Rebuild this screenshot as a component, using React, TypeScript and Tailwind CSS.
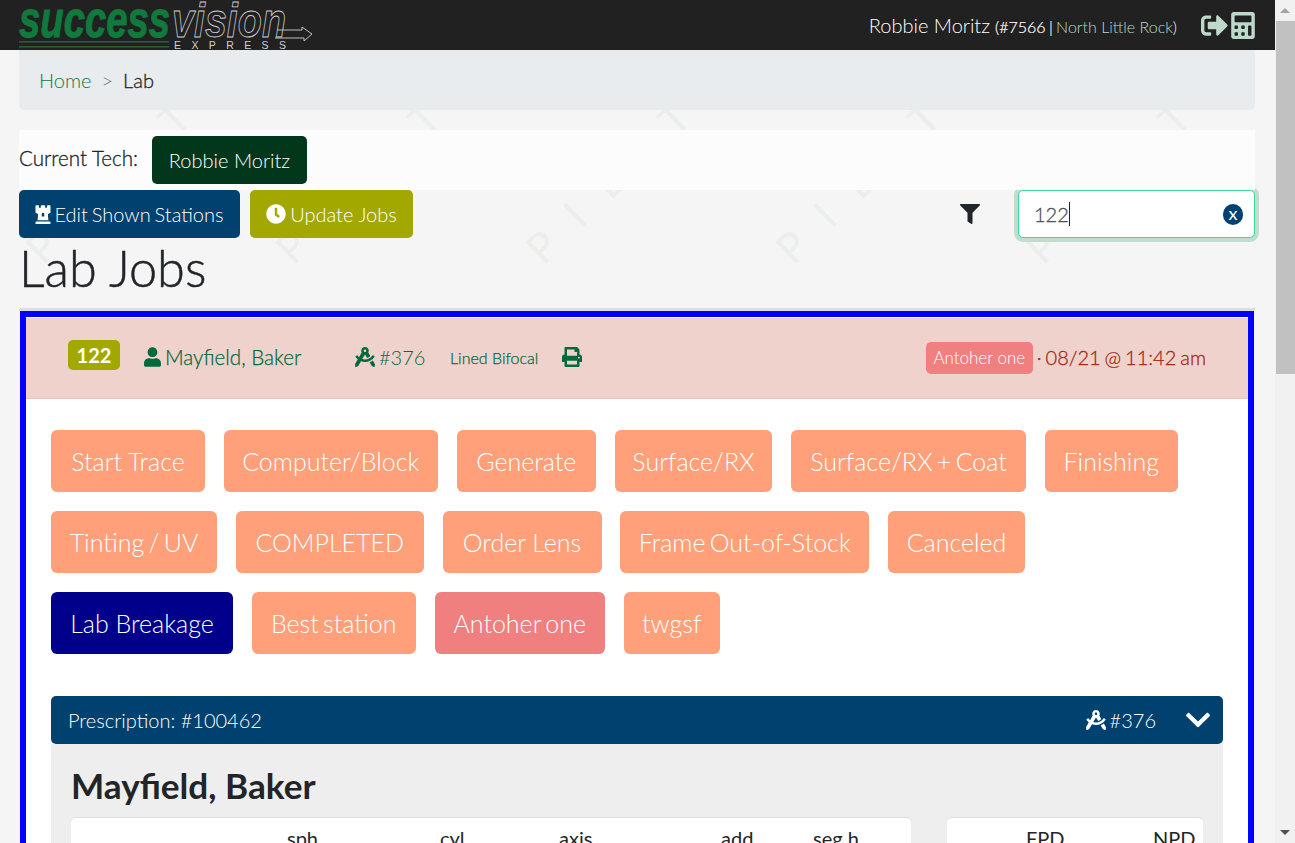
import { FaCalculator, FaChessRook, FaChevronDown, FaClock, FaDraftingCompass, FaFilter, FaPrint, FaSignOutAlt, FaUser } from 'react-icons/fa'

const stationRows = [
  [
    { name: 'Start Trace', width: 'w-[154px]' },
    { name: 'Computer/Block', width: 'w-[214px]' },
    { name: 'Generate', width: 'w-[139.5px]' },
    { name: 'Surface/RX', width: 'w-[157.5px]' },
    { name: 'Surface/RX + Coat', width: 'w-[235px]', tight: true },
    { name: 'Finishing', width: 'w-[133px]' },
  ],
  [
    { name: 'Tinting / UV', width: 'w-[166px]', tight: true },
    { name: 'COMPLETED', width: 'w-[188px]' },
    { name: 'Order Lens', width: 'w-[159px]' },
    { name: 'Frame Out-of-Stock', width: 'w-[249px]', tight: true },
    { name: 'Canceled', width: 'w-[137px]' },
  ],
  [
    { name: 'Lab Breakage', width: 'w-[182px]' },
    { name: 'Best station', width: 'w-[164px]', tight: true },
    { name: 'Antoher one', width: 'w-[170.5px]', tight: true },
    { name: 'twgsf', width: 'w-[96px]' },
  ],
]

const marks = [40, 290, 540, 790, 1040]

function Logo() {
  return (
    <svg width="300" height="50" viewBox="0 0 300 50" className="ml-[19px] shrink-0">
      <text x="0" y="37" textLength="151" lengthAdjust="spacingAndGlyphs" fontFamily="'Liberation Sans', sans-serif" fontWeight="700" fontStyle="italic" fontSize="52" fill="#0f7a3c" stroke="#0f7a3c" strokeWidth="1">success</text>
      <rect x="0" y="41" width="150" height="1.6" fill="#2c5a30" />
      <rect x="0" y="46" width="150" height="1.6" fill="#2c5a30" />
      <text x="153" y="37" textLength="114" lengthAdjust="spacingAndGlyphs" fontFamily="'Liberation Sans', sans-serif" fontWeight="700" fontStyle="italic" fontSize="49" fill="none" stroke="#d0d0d0" strokeWidth="0.9">vision</text>
      <path d="M258 30 H283 V27 L293 34 L285 41 V38 H256" fill="none" stroke="#d0d0d0" strokeWidth="0.9" />
      <text x="155" y="48.5" fontFamily="'Liberation Sans', sans-serif" fontSize="10.5" letterSpacing="10.4" fill="#d0d0d0">EXPRESS</text>
    </svg>
  )
}

function Watermark() {
  return (
    <div className="absolute inset-0 overflow-hidden pointer-events-none">
      {marks.map(x => (
        <div
          key={x}
          className="absolute flex w-[230px] origin-bottom-left -rotate-[44deg] font-['Lato'] text-[41px] leading-none text-[#ebeeeb]"
          style={{ left: x - 1, top: 236 }}
        >
          {'PILOT'.split('').map((c, i) => (
            <span key={i} className="w-[46px] text-center">{c}</span>
          ))}
        </div>
      ))}
    </div>
  )
}

export default function App() {
  return (
    <div className="flex h-[843px] overflow-hidden font-['Lato',sans-serif] text-[#212529]">
      <div className="relative flex-1 min-w-0 bg-[#f5f5f5]">
        <Watermark />
        <div className="relative">
          {/* Top bar */}
          <header className="h-[50px] bg-[#212121] flex items-center justify-between pr-5">
            <Logo />
            <div className="flex items-center">
              <div className="flex items-baseline">
                <span className="text-[20px] font-light text-white">Robbie Moritz</span>
                <span className="ml-[5px] text-[16px] font-light text-white whitespace-pre">
                  <span className="[-webkit-text-stroke:0.2px] [word-spacing:-1px]">(#7566 | </span>
                  <span className="text-[#bcd9ca]">North Little Rock</span>)
                </span>
              </div>
              <FaSignOutAlt className="ml-6 w-[27px] h-[27px] text-[#bcd9ca]" />
              <FaCalculator className="ml-[3px] w-[24px] h-[27px] text-[#bcd9ca]" />
            </div>
          </header>

          <main className="pl-[19px] pr-5">
            {/* Breadcrumb */}
            <nav className="h-[60px] mb-5 bg-[#e9ecef] rounded-b-[5px] flex items-center px-5 text-[20px]">
              <span className="font-light text-[#0f7a3c]">Home</span>
              <span className="mx-[10px] font-light text-[#6c757d]">&gt;</span>
              <span className="font-light [-webkit-text-stroke:0.3px]">Lab</span>
            </nav>

            {/* Current tech */}
            <div className="relative z-10 h-[60px] bg-[#fcfcfc] flex items-center text-[20px]">
              <span className="w-[133px] mb-1 text-[20.6px] font-light [-webkit-text-stroke:0.3px]">Current Tech:</span>
              <button className="w-[155px] h-12 bg-[#03371c] text-white font-light rounded-[5px]">Robbie Moritz</button>
            </div>

            {/* Actions */}
            <div className="h-12 flex items-center text-[20px]">
              <button className="h-12 w-[221px] bg-[#00416f] text-white font-light rounded-[5px] flex items-center justify-center gap-[3px] [word-spacing:-1.5px]">
                <FaChessRook className="w-[16px] h-[20px]" />
                Edit Shown Stations
              </button>
              <button className="ml-[10px] h-12 w-[163px] bg-[#a3a800] text-white font-light rounded-[5px] flex items-center justify-center gap-[4px]">
                <FaClock className="w-5 h-5" />
                Update Jobs
              </button>
              <FaFilter className="ml-auto mr-[38px] w-5 h-5 mb-[1px]" />
              <div className="relative w-[237px] h-12 bg-white border border-[#35e08e] rounded-[5px] shadow-[0_0_0_4px_#c3dccf] flex items-center pl-[15px]">
                <span className="text-[#495057] font-light [-webkit-text-stroke:0.3px]">122</span>
                <span className="w-px h-6 bg-[#212529]" />
                <span className="absolute right-[11px] top-[13px] w-5 h-[21px] rounded-full bg-[#00416f] text-white text-[18px] leading-[19px] text-center">x</span>
              </div>
            </div>

            <h1 className="h-[70px] text-[50.5px] leading-[60px] font-light [-webkit-text-stroke:0.5px]">Lab Jobs</h1>

            {/* Job card */}
            <section className="border-t-[3px] border-[#dedede]">
              <div className="ml-[0.5px] mr-px border-[6px] border-[#0000ff] border-b-0 bg-white h-[600px]">
                <div className="mt-px h-[81px] bg-[#f0d2cd] border-b border-[#e8c4b8] flex items-center pl-[42.5px] pr-[42px] pb-[2px] text-[20px] text-[#006a3c]">
                  <span className="mb-1 w-[52px] h-[30px] bg-[#a3a800] text-white font-bold rounded-[5px] text-center leading-[30px]">122</span>
                  <FaUser className="ml-6 w-[17px] h-5" />
                  <span className="ml-1 w-[190px] text-[20.6px] font-light [-webkit-text-stroke:0.25px]">Mayfield, Baker</span>
                  <FaDraftingCompass className="w-5 h-5" />
                  <span className="ml-1 font-light w-[71px]">#376</span>
                  <span className="text-[16px] mt-[2px] font-light [-webkit-text-stroke:0.25px]">Lined Bifocal</span>
                  <FaPrint className="ml-6 w-5 h-5" />
                  <span className="ml-auto mt-[2px] h-8 w-[107px] text-center bg-[#f08080] text-white text-[17px] font-light rounded-[5px] leading-8">Antoher one</span>
                  <span className="ml-[4px] text-[#a32a12] font-light [-webkit-text-stroke:0.3px] [word-spacing:-1.5px]">· 08/21 @ 11:42 am</span>
                </div>

                <div className="pl-[25.5px] pr-[25px]">
                  <div className="pt-[31px] flex flex-col gap-[19px]">
                    {stationRows.map((row, i) => (
                      <div key={i} className="flex gap-[18.75px]">
                        {row.map(s => (
                          <button
                            key={s.name}
                            className={`h-[62px] pt-[2px] rounded-[6px] text-white text-[25px] font-light ${s.width} ${s.tight ? '[word-spacing:-2.5px]' : ''} ${
                              s.name === 'Lab Breakage' ? 'bg-[#00008b]' : s.name === 'Antoher one' ? 'bg-[#f08080]' : 'bg-[#ffa07a]'
                            }`}
                          >
                            {s.name}
                          </button>
                        ))}
                      </div>
                    ))}
                  </div>

                  {/* Prescription */}
                  <div className="mt-[42px] h-12 bg-[#00416f] rounded-[5px] flex items-center pl-[17px] pr-[11px] text-white text-[20px] font-light">
                    <span>Prescription: #100462</span>
                    <FaDraftingCompass className="ml-auto w-5 h-5" />
                    <span className="ml-[4px]">#376</span>
                    <FaChevronDown className="ml-[28px] w-7 h-7" />
                  </div>
                  <div className="bg-[#eeeeee] px-5 h-[300px]">
                    <h2 className="pt-[20px] h-[73px] text-[35.2px] leading-[42px] font-bold">Mayfield, Baker</h2>
                    <div className="flex gap-[36px]">
                      <div className="relative w-[840px] h-20 bg-white border-t border-[#dedede] rounded-[5px] text-[20px]">
                        <span className="absolute left-[216px] top-[5px]">sph</span>
                        <span className="absolute left-[369px] top-[5px]">cyl</span>
                        <span className="absolute left-[488px] top-[5px]">axis</span>
                        <span className="absolute left-[650px] top-[5px]">add</span>
                        <span className="absolute left-[742px] top-[5px]">seg h</span>
                      </div>
                      <div className="relative w-[256px] h-20 bg-white border-t border-[#dedede] rounded-[5px] text-[20px]">
                        <span className="absolute left-[79px] top-[5px]">FPD</span>
                        <span className="absolute left-[206px] top-[5px]">NPD</span>
                      </div>
                    </div>
                  </div>
                </div>
              </div>
            </section>
          </main>
        </div>
      </div>

      {/* Scrollbar */}
      <div className="w-5 shrink-0 bg-[#f1f1f1] flex flex-col items-center">
        <div className="h-[21px] flex items-center justify-center">
          <div className="w-0 h-0 border-x-[5px] border-x-transparent border-b-[5px] border-b-[#a3a3a3]" />
        </div>
        <div className="ml-px w-[19px] h-[353px] bg-[#c1c1c1]" />
        <div className="mt-auto h-[21px] flex items-center justify-center">
          <div className="w-0 h-0 border-x-[5px] border-x-transparent border-t-[5px] border-t-[#505050]" />
        </div>
      </div>
    </div>
  )
}
